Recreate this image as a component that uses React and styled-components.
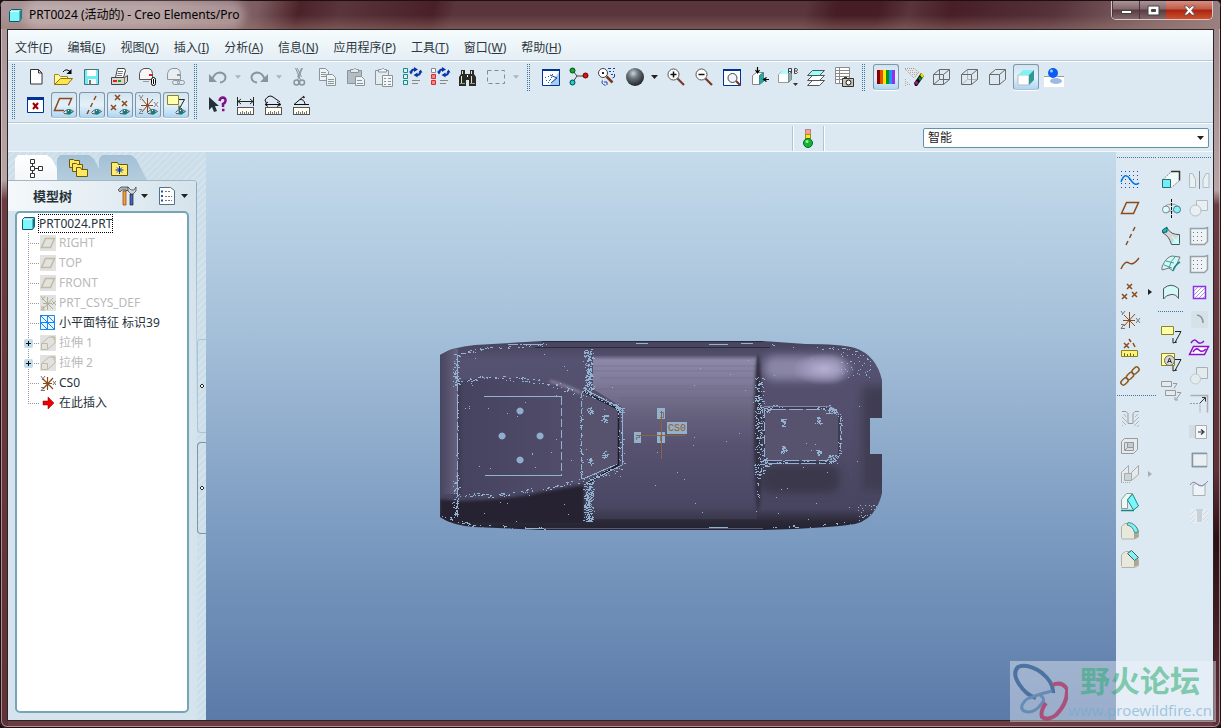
import React, { useState } from "react";
import styled, { createGlobalStyle, css } from "styled-components";

/* ---------- icons, all on a 20x20 grid ---------- */

const eye = (
  <>
    <path d="M9.500 17.500Q14 12 19.500 16.500Q15 20.500 10 18.500" fill="#dfeaea" stroke="#555" />
    <circle cx="15" cy="17" r="2.500" fill="#127f7c" />
    <rect x="14" y="15" width="1" height="1" fill="#fff" />
  </>
);

const ruler = (
  <>
    <rect x="1.500" y="12.500" width="16" height="7" fill="#fffdf4" stroke="#555" />
    <path d="M4.500 19v-2M6.500 19v-3M8.500 19v-2M10.500 19v-3M12.500 19v-2M14.500 19v-3" stroke="#777" />
  </>
);

const refresh = (
  <>
    <path d="M9 6Q9 2.500 12.500 2.500M18.500 4Q18.500 8 15 8" fill="none" stroke="#0a35a8" strokeWidth="2" />
    <path d="M12 0l4 2.500-4 2.500zM15.500 5.500l-4 2.500 4 2.500zM7 4.500h4l-2 3zM16.500 5.500h4l-2-3z" fill="#0a35a8" />
  </>
);

const redX = (x, y, c = "#8a4a1c") => (
  <path key={`${x}-${y}`} d={`M${x} ${y}l5 5M${x + 5} ${y}l-5 5`} stroke={c} strokeWidth="1.500" fill="none" />
);

const wireBox = (
  <path d="M1.500 7.500h10v10h-10zM7.500 2.500h10v10M1.500 7.500l6-5M11.500 7.500l6-5M11.500 17.500l6-5" fill="none" stroke="#6a6a6a" />
);

const hatch = "M2 9l5 5M2 13l4 4M2 17l1 1M14 14l5-5M14 18l5-5M17 19l2-2M15 9l3-3M4 6l2 3";

const icons = {
  new: <path d="M4.500 2.500h8l3.500 3.500v11h-11.500zM12.500 2.500v3.500h3.500" fill="#fff" stroke="#333" />,
  open: (
    <>
      <path d="M.500 17.500V7.500h4l2 2h7v3" fill="#fff6a0" stroke="#a08a20" />
      <path d="M.500 17.500l6-6h12l-5 6z" fill="#ffe44a" stroke="#8a7420" />
      <path d="M9 5Q12 1 16 4.500" fill="none" stroke="#000" />
      <path d="M17.500 2v5h-5z" fill="#000" />
    </>
  ),
  save: (
    <>
      <path d="M2.500 2.500h14v15h-14z" fill="#70ecf4" stroke="#48737c" />
      <path d="M5 3h9v6h-9z" fill="#fff" />
      <path d="M6 12h8v5h-8z" fill="#f3f8f8" />
      <path d="M7 13h2v4h-2z" fill="#777" />
    </>
  ),
  print: (
    <>
      <path d="M5.500 10.500l2-9h7l1 2-2 7z" fill="#fff" stroke="#444" />
      <path d="M8 4.500h5M7.500 6.500h5M7 8.500h5" stroke="#777" />
      <path d="M1.500 10.500h13l3-2v6l-3 3h-13z" fill="#d6d6ce" stroke="#444" />
      <path d="M14.500 10.500v7" stroke="#777" />
      <path d="M3 13h4v2h-4z" fill="#e02020" />
      <path d="M8 13h3v2h-3z" fill="#18a018" />
    </>
  ),
  mail: (
    <>
      <path d="M1.500 12.500V6.500Q2 2.500 6 1.500h5Q14.500 2.500 14.500 6.500v6z" fill="#f7f7f7" stroke="#555" />
      <path d="M5 14.500h6" stroke="#999" />
      <path d="M11 7h3v2h-3z" fill="#e02020" />
      <rect x="13.500" y="10.500" width="4" height="8" rx="2" fill="#fff" stroke="#000" />
      <path d="M15.500 12v5" stroke="#000" />
    </>
  ),
  mailLink: (
    <>
      <path d="M1.500 12.500V6.500Q2 2.500 6 1.500h5Q14.500 2.500 14.500 6.500v6z" fill="#e9eef2" stroke="#8f979c" />
      <path d="M11 7h3v2h-3z" fill="#8f979c" />
      <rect x="6.500" y="13.500" width="7" height="4" rx="2" fill="none" stroke="#8f979c" />
      <rect x="11.500" y="13.500" width="7" height="4" rx="2" fill="none" stroke="#8f979c" />
    </>
  ),
  closeWin: (
    <>
      <path d="M1.500 2.500h16v15h-16z" fill="#fff" stroke="#003399" />
      <path d="M1 2h17v3h-17z" fill="#003399" />
      <path d="M7 8l5 6M12 8l-5 6" stroke="#a00000" strokeWidth="2" />
    </>
  ),
  planeOn: (
    <>
      <path d="M10 15.500h-9.500l5-12h12l-3 7" fill="none" stroke="#8a4a1c" strokeWidth="1.500" />
      {eye}
    </>
  ),
  axisOn: (
    <>
      <path d="M14 1l-2 4M10.500 8l-2 4M7 15l-2 4" fill="none" stroke="#8a4a1c" strokeWidth="1.500" />
      {eye}
    </>
  ),
  pointOn: (
    <>
      {redX(5, 0)}
      {redX(1, 10)}
      {redX(12, 6)}
      {eye}
    </>
  ),
  csysOn: (
    <>
      <path d="M9.500 3v15M3 10.500h12M4 4l10 12M15 4l-11 13" stroke="#8a4a1c" fill="none" />
      <path d="M1 0l2 3M5 0l-3 5M16 7l4 5M20 7l-4 5M1 14.500h3l-3 4h4" stroke="#888" fill="none" />
      {eye}
    </>
  ),
  noteOn: (
    <>
      <path d="M1.500.500h11v9h-11z" fill="#ffffb0" stroke="#8a8620" />
      <path d="M13 4.500h5.500l-5 9M13 10.500v4l3-1" fill="none" stroke="#222" />
      {eye}
    </>
  ),
  undo: (
    <>
      <path d="M4.500 11.500Q7 5.500 12 5.500Q17.500 6.500 17.500 10.500Q17 15 12 15.500" fill="none" stroke="#8a949b" strokeWidth="2" />
      <path d="M1 7v8h8z" fill="#8a949b" />
    </>
  ),
  redo: (
    <>
      <path d="M15.500 11.500Q13 5.500 8 5.500Q2.500 6.500 2.500 10.500Q3 15 8 15.500" fill="none" stroke="#8a949b" strokeWidth="2" />
      <path d="M19 7v8h-8z" fill="#8a949b" />
    </>
  ),
  cut: (
    <g fill="none" stroke="#8a949b">
      <path d="M5.500 1l5 12M12.500 1l-5 12M7 1l4.500 9M11.500 1l-4 9" />
      <circle cx="6.500" cy="15.500" r="2.500" strokeWidth="1.500" />
      <circle cx="12" cy="15.500" r="2.500" strokeWidth="1.500" />
    </g>
  ),
  copy: (
    <g fill="#eef3f6" stroke="#8a949b">
      <path d="M1.500 1.500h6l3 3v9h-9zM3 5.500h5M3 7.500h5M3 9.500h5" />
      <path d="M8.500 7.500h6l3 3v8h-9zM10 12.500h6M10 14.500h6M10 16.500h6" />
    </g>
  ),
  paste: (
    <g stroke="#8a949b">
      <path d="M1.500 3.500h14v13h-14z" fill="#b6bdc2" />
      <path d="M4.500 5.500v-3h3l1-1h1l1 1h2v3z" fill="#e4e9ec" />
      <path d="M9.500 9.500h6l3 3v6h-9zM11 13.500h5M11 16.500h6" fill="#eef3f6" />
    </g>
  ),
  pasteSpecial: (
    <g stroke="#8a949b">
      <path d="M1.500 3.500h13v14h-13z" fill="#e4ebef" />
      <path d="M4.500 5v-2.500h3l1-1h1l1 1h2v2.500z" fill="#f4f7f8" />
      <path d="M8.500 8.500h10v11h-10zM10 11.500h2M14 11.500h3M10 14.500h2M14 14.500h3M10 17.500h2M14 17.500h3" fill="#f4f7f8" />
    </g>
  ),
  regen: (
    <>
      {[2, 8, 14].map((y) => (
        <path key={y} d={`M1.500 ${y - 0.5}h4v4h-4z`} fill="#d9f5f3" stroke="#138a88" />
      ))}
      {refresh}
      <path d="M10 13.500h8M10 16.500h6" stroke="#888" />
    </>
  ),
  regenManager: (
    <>
      <path d="M1.500 1.500h4v4h-4z" fill="#fff" stroke="#888" />
      {[8, 14].map((y) => (
        <path key={y} d={`M1.500 ${y - 0.5}h4v4h-4z`} fill="#ff8080" stroke="#d03030" />
      ))}
      {refresh}
      <path d="M10 13.500h8M10 16.500h6" stroke="#888" />
    </>
  ),
  find: (
    <>
      <path d="M3 3h4v4h5V3h4v4l2 3v9h-7v-6h-3v6H1v-9l2-3z" fill="#2a2a26" />
      <path d="M3.500 9v8M13.500 9v8M4.500 4v3M13.500 4v3" stroke="#e0e0d0" />
      <path d="M9 8h1v2h-1z" fill="#fff" />
      <path d="M2 16.500h5M12 16.500h5" stroke="#9a9a80" />
    </>
  ),
  selectBox: <path d="M1.500 3.500h17v13h-17z" fill="none" stroke="#808a90" strokeDasharray="4 3" />,
  whatsThis: (
    <>
      <path d="M1 2v13l3-3 2 5 3-1-2-5h4z" fill="#23303a" />
      <path d="M11.500 6Q12 2.500 15 2.500Q18 3 17.500 6Q17 8.500 15 9v3M14 15h2.500" fill="none" stroke="#80108a" strokeWidth="2.500" />
    </>
  ),
  measureLen: (
    <>
      <path d="M1.500 2v9M17.500 2v9M2 6.500h15M5 4l-3 2.500 3 2.500M14 4l3 2.500-3 2.500" fill="none" stroke="#222" />
      {ruler}
    </>
  ),
  measureCurve: (
    <>
      <path d="M2.500 8.500L1 5Q5-1 9 2L16 7M1 9.500h15M4 7l-3 2.500 3 2M13 7l4 2.500-4 2" fill="none" stroke="#111" />
      {ruler}
    </>
  ),
  measureAngle: (
    <>
      <path d="M12 1l-10 8.500h15M8 4.500Q12 4 13 9M11 3l2-1" fill="none" stroke="#111" />
      {ruler}
    </>
  ),
  sketchView: (
    <>
      <path d="M1.500 2.500h17v16h-17z" fill="#fff" stroke="#003399" />
      <path d="M9 18l9-13v13z" fill="#a8cdec" />
      <path d="M1 2h18v2h-18z" fill="#003399" />
      <path d="M4 10.500h1M7 9.500h1M5 13.500h1M9 12.500h1M7 15.500h1M10 10.500h1M11 7.500h1M8 13.500h1" stroke="#06c" />
      <path d="M9 8l7 3-6 5" fill="none" stroke="#2040a0" />
    </>
  ),
  spin: (
    <>
      <path d="M4 4l4 5h8M8 9l-4 6" fill="none" stroke="#444" />
      <circle cx="3.500" cy="3.500" r="2.500" fill="#10b010" stroke="#043" />
      <circle cx="16.500" cy="8.500" r="2.500" fill="#e01010" stroke="#600" />
      <circle cx="3.500" cy="15.500" r="2.500" fill="#18d0d0" stroke="#044" />
    </>
  ),
  orientMode: (
    <>
      <path d="M9.500 9.500l6 6" stroke="#7a3a1a" strokeWidth="2.500" />
      <circle cx="6" cy="6" r="4.500" fill="#fff" stroke="#444" />
      <path d="M5 5h2v2h-2z" fill="#222" />
      <path d="M11 1.500h3M16 1.500h2M12 4.500h2M16 4.500h1M14 7.500h2M17.500 7v3l-2 1M5.500 13.500q-2 3 3 5M7 15h3v3" stroke="#1c3ea8" fill="none" />
    </>
  ),
  zoomIn: (
    <>
      <path d="M11 11l7 7" stroke="#7a3a2a" strokeWidth="2.200" />
      <circle cx="7.500" cy="7.500" r="5.500" fill="#fff" stroke="#555" />
      <path d="M4.500 7.500h6M7.500 4.500v6" stroke="#111" strokeWidth="1.500" />
    </>
  ),
  zoomOut: (
    <>
      <path d="M11 11l7 7" stroke="#7a3a2a" strokeWidth="2.200" />
      <circle cx="7.500" cy="7.500" r="5.500" fill="#fff" stroke="#555" />
      <path d="M4.500 7.500h6" stroke="#111" strokeWidth="1.500" />
    </>
  ),
  refit: (
    <>
      <path d="M1.500 2.500h17v16h-17z" fill="#fff" stroke="#003399" />
      <path d="M1 2h18v2h-18z" fill="#003399" />
      <path d="M14 14l4.500 4.500" stroke="#7a3a2a" strokeWidth="2.200" />
      <circle cx="10.500" cy="11" r="4.500" fill="#f0f4fc" stroke="#444" />
    </>
  ),
  reorient: (
    <>
      <path d="M2.500 8.500l4-3h7l-4 3v9h-7z" fill="#fff" stroke="#888" />
      <path d="M9.500 8.500l4-3v9l-4 3z" fill="#22aaa6" stroke="#4a8a88" />
      <path d="M7.500 0v5M5.500 3l2 3 2-3M19 12.500h-5M16.500 10.500l-3 2 3 2" fill="none" stroke="#000" strokeWidth="1.200" />
    </>
  ),
  savedViews: (
    <>
      <path d="M.500 7.500l3-3h10l-3 3v8h-10z" fill="#fff" stroke="#999" />
      <path d="M1 7l3-3h9l-3 3z" fill="#a8ffff" />
      <path d="M10.500 7.500l3-3v8l-3 3z" fill="#7ab8b6" stroke="#888" />
      <path d="M10.500 6.500V1.500h3v5M10.500 4.500h3M16.500 6.500V1.500h2l1 1-1 2 1 1-1 1zM16.500 4h2" fill="none" stroke="#444" />
      <path d="M15 16h5l-2.500 3z" fill="#333" />
    </>
  ),
  layers: (
    <g stroke="#555">
      <path d="M1.500 18.500l5-5h12l-5 5z" fill="#fff" />
      <path d="M1.500 13.500l5-5h12l-5 5z" fill="#fff" />
      <path d="M1.500 8.500l5-5h12l-5 5z" fill="#98ffff" />
    </g>
  ),
  viewManager: (
    <>
      <path d="M1.500.500h14v16h-14zM5.500.500v16M1.500 3.500h14M1.500 6.500h14M1.500 9.500h14M1.500 12.500h14" fill="#fff" stroke="#8a8a8a" />
      <path d="M8.500 11.500h11v8h-11z" fill="#c8c8b4" stroke="#333" />
      <path d="M10 10.500h3" stroke="#333" />
      <circle cx="14.500" cy="15.500" r="2.500" fill="#fff" stroke="#111" />
    </>
  ),
  rainbow: (
    <>
      {["#8b0000", "#e05000", "#ffe800", "#0a960a", "#1e90ff", "#9030f0"].map((c, i) => (
        <rect key={c} x={1 + i * 3} y="3" width="3" height="14" fill={c} />
      ))}
    </>
  ),
  eraser: (
    <>
      <path d="M1 1h9l5 4-5 6-9-8z" fill="#e6e8e8" />
      <path d="M1 1.500h9l5 4M1 2l9 9 5-6" fill="none" stroke="#999" strokeDasharray="1 1" />
      <path d="M4 3.500h6M6 5.500h7M8 7.500h5M1.500 12v7M3.500 15v4M5.500 17v2" fill="none" stroke="#aaa" strokeDasharray="1 1" />
      <path d="M10 16l7-10 3 3-7 10h-2z" fill="#111" />
      <path d="M16 8l2-2 2 3-2 2z" fill="#f0d800" />
      <path d="M14 11l2-1 2 2-2 2z" fill="#0a8a1a" />
      <path d="M11 15l2-1 1 2-2 2z" fill="#c010c0" />
    </>
  ),
  wireframe: (
    <>
      {wireBox}
      <path d="M7.500 2.500v10h10M1.500 17.500l6-5" fill="none" stroke="#6a6a6a" />
    </>
  ),
  hiddenLine: (
    <>
      <path d="M7.500 2.500v10h10M1.500 17.500l6-5" fill="none" stroke="#b4b4b4" />
      {wireBox}
    </>
  ),
  noHidden: wireBox,
  shading: (
    <>
      <path d="M2 8h11v10h-11z" fill="#fff" stroke="#bbb" />
      <path d="M2 8l5-5h11l-5 5z" fill="#7ef4f6" />
      <path d="M13 8l5-5v10l-5 5z" fill="#2f9794" />
    </>
  ),
  enhanced: (
    <>
      <path d="M0 10h20v10h-20z" fill="#fff" />
      <path d="M0 9.500h5M13 9.500h7" stroke="#999" />
      <ellipse cx="12" cy="14" rx="6" ry="3" fill="#9dbbe2" />
      <circle cx="9" cy="6" r="5" fill="#0a5cf0" />
      <circle cx="7.500" cy="4" r="1.500" fill="#8fd0ff" />
    </>
  ),
  sketch: (
    <>
      {[2, 6, 10, 14, 18].map((y) => (
        <path key={y} d={`M1 ${y - 0.5}h18`} stroke="#2048b0" strokeDasharray="1 3" />
      ))}
      <path d="M1 12Q5 1 10 9T19 13" fill="none" stroke="#0078e8" strokeWidth="1.500" />
    </>
  ),
  plane: <path d="M6.500 4.500h12l-5 11h-12z" fill="none" stroke="#8a4a1c" strokeWidth="1.500" />,
  axis: <path d="M15 1l-2 4M11.500 8l-2 4M8 15l-2 4" fill="none" stroke="#8a4a1c" strokeWidth="1.500" />,
  curve: <path d="M1 15Q5 6 9 9T19 4" fill="none" stroke="#8a4a1c" strokeWidth="1.500" />,
  points: (
    <>
      {redX(7, 2)}
      {redX(2, 12)}
      {redX(12, 10)}
    </>
  ),
  csys: (
    <>
      <path d="M9.500 2v16M3 10.500h12M4 5l11 11M15 4l-11 12" stroke="#8a4a1c" fill="none" />
      <path d="M1 1l2 3M5 1l-3 4M16 8l4 5M20 8l-4 5M1 14.500h3l-3 4h4" stroke="#777" fill="none" />
    </>
  ),
  analysis: (
    <>
      {redX(4, 5)}
      <path d="M9 1l2 3M13 5l2 4" stroke="#8a4a1c" strokeWidth="1.500" />
      <path d="M1.500 12.500h16v6h-16z" fill="#fff27a" stroke="#8a8420" />
      <path d="M4.500 18v-3M7.500 18v-2M10.500 18v-3M13.500 18v-2" stroke="#6e6a10" />
    </>
  ),
  chain: (
    <g fill="none" stroke="#8a5a20" strokeWidth="1.500">
      <rect x="-4" y="-2.500" width="8" height="5" rx="2.500" transform="translate(4.500 15.500) rotate(-45)" />
      <rect x="-4" y="-2.500" width="8" height="5" rx="2.500" transform="translate(10 10) rotate(-45)" />
      <rect x="-4" y="-2.500" width="8" height="5" rx="2.500" transform="translate(15.500 4.500) rotate(-45)" />
    </g>
  ),
  hole: (
    <>
      <path d={hatch} stroke="#b0b4b6" />
      <path d="M2 3.500h4l2 2v10h5V5.500l2-2h4" fill="none" stroke="#999" />
    </>
  ),
  shell: (
    <g stroke="#999">
      <path d="M1.500 5.500l3-3h13v11l-4 4h-12zM13.500 17.500l4-4" fill="#e4eaee" />
      <path d="M4.500 6.500h9v8h-9z" fill="#d8dfe3" />
      <path d="M7.500 6.500h6v5h-6zM4.500 14.500l3-3" fill="#c2cacf" />
    </g>
  ),
  rib: (
    <g stroke="#aaa">
      <path d="M1.500 18.500V8.500l7-7v9M11.500 16.500V8.500l7-7v9z" fill="#e4eaee" />
      <path d="M4.500 9.500h7v7h-7z" fill="#ccd4d8" />
      <path d="M1 18.500h10" strokeDasharray="1 1" />
    </g>
  ),
  draft: (
    <>
      <path d="M1.500 7.500l5-6h6l-5 6v9h-6z" fill="#e9fbf6" stroke="#999" />
      <path d="M7.500 8l5-6 6 12-5 4z" fill="#7cf6fa" stroke="#158a88" />
      <path d="M1 18.500h13" stroke="#158a88" strokeWidth="1.500" />
    </>
  ),
  round: (
    <>
      <path d="M1.500 18V6.500L5 3.500h5Q18 5 18.500 13v4l-4 2h-13" fill="#e8e8dc" stroke="#b4b4a4" />
      <path d="M14 13l4-1v5l-4 2z" fill="#a8a894" />
      <path d="M8 2.500Q16 3 18.500 12l-4 .5Q13 6 7 5z" fill="#7cf4f8" stroke="#4a8a8a" />
    </>
  ),
  chamfer: (
    <>
      <path d="M1.500 18V6.500l4-3h5l8 8v6l-4 2h-13" fill="#e8e8dc" stroke="#b4b4a4" />
      <path d="M14 13l4-2v6l-4 2z" fill="#a8a894" />
      <path d="M7.500 5.500l4-3 7 7-4 3z" fill="#7cf4f8" stroke="#555" />
    </>
  ),
  extrude: (
    <>
      <path d="M1.500 10l9-8.500h8v9l-8 7" fill="#f0faf8" stroke="#888" strokeDasharray="2 1" />
      <path d="M10 1.500h8.500v9" fill="none" stroke="#333" strokeWidth="1.500" />
      <path d="M1.500 9.500h8v8h-8z" fill="#70f0f4" stroke="#2a6a7a" />
    </>
  ),
  revolve: (
    <>
      <circle cx="5" cy="11.500" r="3.500" fill="#d8ffff" stroke="#888" />
      <circle cx="16" cy="11.500" r="3.500" fill="#80f4f6" stroke="#478" />
      <path d="M4 8Q10.500 4 17 8M5 15Q10.500 11 16 15" fill="none" stroke="#999" />
      <path d="M10.500 1v19" stroke="#111" strokeDasharray="3 1" />
    </>
  ),
  sweep: (
    <>
      <path d="M6 2Q10 9 18.500 8.500v10h-8Q8 10 2 7z" fill="#d4d7d7" stroke="#555" />
      <path d="M1.500 6.500V4L6 1v5z" fill="#28b8b8" stroke="#066" />
      <path d="M11 18V17l7-8v9z" fill="#b4ffff" />
      <path d="M11 10.500l7 7" stroke="#fff" />
    </>
  ),
  blend: (
    <>
      <path d="M1 13Q5 3 11 2l8 1Q17 7 16 10Q13 12 12 17L8 14l-7 2z" fill="#d0f8f8" stroke="#777" />
      <path d="M5 7l8 2M8 14q1-7 7-12M3 11l8 3" fill="none" stroke="#4a9a98" />
      <path d="M12 17q2-6 7-9" fill="none" stroke="#158a88" strokeWidth="1.500" />
    </>
  ),
  fill: <path d="M2.500 17V6.500Q10 0 17.500 6.500v10Q15 12 10 12.500T2.500 17z" fill="#d4f8f8" stroke="#555" />,
  noteYellow: (
    <>
      <path d="M.500 2.500h12v8h-12z" fill="#ffffa8" stroke="#8a8620" />
      <path d="M14 7.500h6l-6 11M12 14v5l4-1" fill="none" stroke="#222" />
    </>
  ),
  symbolNote: (
    <>
      <path d="M.500 1.500h13v12h-13z" fill="#ffffa8" stroke="#8a8620" />
      <circle cx="8.500" cy="8.500" r="5" fill="#d8d8d0" stroke="#666" />
      <path d="M6.500 11l2-5 2 5M7 9.500h3" fill="none" stroke="#333" />
      <path d="M14 7.500h6l-6 11M12 14v5l4-1" fill="none" stroke="#222" />
    </>
  ),
  noteGrey: (
    <g fill="#e4eaee" stroke="#999">
      <path d="M.500 1.500h10v5h-10zM4.500 10.500h10v5h-10z" />
      <path d="M12 3.500h4l-3 5M16 12.500h4l-5 7M14 17v3h3" fill="none" />
    </g>
  ),
  mirror: (
    <g fill="#e9f0f4" stroke="#b4bcc2">
      <path d="M.500 3.500h3l3 6v8h-6zM20 3.500h-3l-3 6v8h6z" />
      <path d="M10.500 1v18" stroke="#888" />
    </g>
  ),
  merge: (
    <g fill="#e9f0f4" stroke="#b4bcc2">
      <path d="M7.500 2.500h11v10h-11z" />
      <circle cx="6.500" cy="12.500" r="5.500" />
    </g>
  ),
  pattern: (
    <>
      <path d="M1.500 2.500h14l3-1v14l-3 3h-14z" fill="#edf3f6" stroke="#98a0a6" strokeWidth="1.500" />
      <path d="M4 6.500h11M4 10.500h11M4 14.500h11" stroke="#777" strokeDasharray="1 3" />
    </>
  ),
  hatchBox: (
    <>
      <path d="M4.500 4.500h12v12h-12z" fill="#fff" stroke="#8c30e8" strokeWidth="1.500" />
      <path d="M5 9l4-4M5 13l8-8M6 16l10-10M10 16l6-6M14 16l2-2" stroke="#a494e8" />
    </>
  ),
  trim: (
    <>
      <path d="M2 1h17v17h-17z" fill="#d6e1e8" />
      <path d="M8 5Q14 6 14 13" fill="none" stroke="#8c949c" strokeWidth="1.500" />
    </>
  ),
  styleCurve: (
    <g fill="none" stroke="#8c10c8" strokeWidth="1.500">
      <path d="M2 5Q5 0 8 3.500T15 3" />
      <path d="M4.500 8.500h15l-4 8h-15z" fill="#fff" />
      <path d="M4 14Q7 9 10 12T17 11" />
    </g>
  ),
  mergeGrey: (
    <g fill="#e4ebef" stroke="#c0c8cc">
      <path d="M7.500 1.500h11v11h-11z" stroke="#a8b0b6" />
      <circle cx="6.500" cy="13" r="5" />
    </g>
  ),
  scaleBox: (
    <>
      <path d="M1.500 1.500h17v17" fill="none" stroke="#a8b0b6" strokeWidth="1.500" />
      <path d="M1 9.500h10v9" fill="none" stroke="#98a0a6" strokeDasharray="2 1" />
      <path d="M11 9l5-5M13 3.500h3.500v4" fill="none" stroke="#333" />
    </>
  ),
  arrowBox: (
    <>
      <path d="M0 3h7v13h-7z" fill="#d3dce2" />
      <path d="M6.500 3.500h11v13h-11z" fill="#f4f7f9" stroke="#a8b0b6" />
      <path d="M9 10h5M12 7.500l3 2.500-3 2.500" fill="none" stroke="#333" strokeWidth="1.200" />
    </>
  ),
  frameBox: (
    <>
      <path d="M3 3h15v14h-15z" fill="#e9f0f4" stroke="#b4bcc2" />
      <path d="M18 3.500h-14.500v13h14.500" fill="none" stroke="#8a949b" strokeWidth="1.500" />
    </>
  ),
  boundary: (
    <>
      <path d="M4 17.500V7q3-3 6 0 4 2 6-1v11.500z" fill="#edf3f6" stroke="#a8b0b6" />
      <path d="M1 7Q4 2 8 6T16 6l3-3" fill="none" stroke="#889" />
    </>
  ),
  holeGrey: (
    <>
      <path d="M1 3h18v14h-18z" fill="#e6edf2" />
      <path d="M7 3h7v2h-1v11h-5v-11h-1z" fill="#c8d1d7" />
      <path d="M1 9l5-5M1 14l5-5M2 17l4-4M14 9l5-5M14 14l5-5M15 17l4-4" stroke="#d0d8dd" />
    </>
  ),
  tabTree: (
    <path d="M4.500 1.500h4v4h-4zM4.500 8.500h4v4h-4zM4.500 15.500h4v4h-4zM12.500 8.500h4v4h-4zM6.500 5.500v3M6.500 12.500v3M8.500 10.500h4" fill="#fff" stroke="#333" />
  ),
  tabFolders: (
    <g fill="#ffe860" stroke="#6a5a10">
      <path d="M1.500 1.500h4l1 1h5v7h-10z" />
      <path d="M4.500 5.500h4l1 1h5v7h-10z" />
      <path d="M8.500 9.500h4l1 2h6v7h-11z" />
    </g>
  ),
  tabFav: (
    <>
      <path d="M1.500 4.500h6l1 2h9v11h-16z" fill="#ffec70" stroke="#6a5a10" />
      <path d="M9.500 8v8M5.500 12h8M7 9.500l5 5M12 9.500l-5 5" stroke="#0030b0" />
    </>
  ),
  tools: (
    <>
      <path d="M0 4l3-3h7l1 3-3 1v-1h-4l-2 2z" fill="#aab4ba" stroke="#333" strokeWidth=".7" />
      <path d="M5 5h3v14h-3z" fill="#f0a040" stroke="#8a4010" strokeWidth=".7" />
      <path d="M12 8h3v11h-3z" fill="#3a66c8" stroke="#222" strokeWidth=".7" />
      <path d="M10 1v4l3 3h2l3-3V1l-2 3h-3z" fill="#d0d8dc" stroke="#333" strokeWidth=".7" />
    </>
  ),
  listShow: (
    <>
      <path d="M1.500 1.500h11l4 3v14h-15z" fill="#fff" stroke="#55708a" />
      <path d="M3 5.500h2M3 10h2M3 14.500h2" stroke="#1a56b0" strokeWidth="2" />
      <path d="M7 5.500h6M7 10.500h7M7 14.500h7" stroke="#777" strokeDasharray="2 1" />
    </>
  ),
};

const treeIcons = {
  part: (
    <>
      <path d="M1.500 4.500l2-2h10v9l-2 3h-10z" fill="#80f6f8" stroke="#157" />
      <path d="M11.500 4.500l2-2v9l-2 3z" fill="#127a80" />
      <path d="M2 4.500h9" stroke="#dff" />
    </>
  ),
  plane: (
    <>
      <path d="M0 0h16v16h-16z" fill="#e2e2e2" />
      <path d="M5.500 3.500h9l-4 9h-9z" fill="none" stroke="#c0bca0" strokeWidth="1.500" />
    </>
  ),
  csysGrey: (
    <>
      <path d="M0 0h16v16h-16z" fill="#e2e2e2" />
      <path d="M7.500 2v13M3 8.500h9M3 4l10 10M13 3l-10 11M1 1l2 3M5 1l-3 4M12 6l4 4M16 6l-4 4M1 12h3l-3 3h4" fill="none" stroke="#b4b098" />
    </>
  ),
  facet: <path d="M.500.500h14v14h-14zM7.500 0v15M0 7.500h15M0 0l15 15M7 0l8 8M0 7l8 8" fill="#e6f8ff" stroke="#1c86ee" />,
  extrude: (
    <>
      <path d="M0 0h16v16h-16z" fill="#e2e2e2" />
      <path d="M1.500 8.500h6v6h-6zM2 8l7-6h6v6l-7 6M11 2h3v3" fill="none" stroke="#c0bca0" />
    </>
  ),
  csys: (
    <>
      <path d="M7.500 2v13M3 8.500h9M3 4l10 10M13 3l-10 11" fill="none" stroke="#8a4a1c" strokeWidth="1.200" />
      <path d="M1 1l2 3M5 1l-3 4M13 6l3 4M16 6l-3 4M1 12.500h3l-3 3h4" fill="none" stroke="#777" />
    </>
  ),
  arrow: <path d="M3 6h5V2l6 6-6 6v-4h-5z" fill="#f00000" stroke="#700" strokeWidth=".5" />,
};

const Icon = ({ name }) => (
  <IconSvg viewBox="0 0 20 20" aria-hidden="true">
    {icons[name]}
  </IconSvg>
);

/* ---------- data ---------- */

const menus = [
  ["文件", "F"], ["编辑", "E"], ["视图", "V"], ["插入", "I"], ["分析", "A"], ["信息", "N"],
  ["应用程序", "P"], ["工具", "T"], ["窗口", "W"], ["帮助", "H"],
];

const fileTools = ["new", "open", "save", "print", "mail", "mailLink"];
const datumTools = ["closeWin", "planeOn", "axisOn", "pointOn", "csysOn", "noteOn"];
const editTools = ["undo", "v-", "redo", "v-", "cut", "copy", "paste", "pasteSpecial", "regen", "regenManager", "find", "selectBox", "v-"];
const measureTools = ["whatsThis", "measureLen", "measureCurve", "measureAngle"];
const viewTools = ["sketchView", "spin", "orientMode", "sphere", "v", "zoomIn", "zoomOut", "refit", "reorient", "savedViews", "layers", "viewManager"];
const displayTools = ["rainbow", "eraser", "wireframe", "hiddenLine", "noHidden", "shading", "enhanced"];

const colA1 = ["sketch", "plane", "axis", "curve", "points", "csys", "analysis", "chain"];
const colA2 = ["hole", "shell", "rib", "draft", "round", "chamfer"];
const colB1 = ["extrude", "revolve", "sweep", "blend", "fill"];
const colB2 = ["noteYellow", "symbolNote", "noteGrey"];
const colC = ["mirror", "merge", "pattern", "pattern", "hatchBox", "trim", "styleCurve", "mergeGrey", "scaleBox", "arrowBox", "frameBox", "boundary", "holeGrey"];

const treeRows = [
  { icon: "plane", label: "RIGHT", grey: true },
  { icon: "plane", label: "TOP", grey: true },
  { icon: "plane", label: "FRONT", grey: true },
  { icon: "csysGrey", label: "PRT_CSYS_DEF", grey: true },
  { icon: "facet", label: "小平面特征 标识39" },
  { icon: "extrude", label: "拉伸 1", grey: true, plus: true },
  { icon: "extrude", label: "拉伸 2", grey: true, plus: true },
  { icon: "csys", label: "CS0" },
  { icon: "arrow", label: "在此插入" },
];

/* ---------- toolbar pieces ---------- */

const Arrow = ({ dim }) => (
  <ArrowBtn aria-label="more">
    <svg width={dim ? 6 : 7} height="4" viewBox="0 0 7 4">
      <path d="M0 0h7L3.500 4z" fill={dim ? "#aab4ba" : "#222"} />
    </svg>
  </ArrowBtn>
);

const Tools = ({ items, pressed = [] }) => (
  <ToolRow>
    {items.map((name, i) => {
      if (name === "v" || name === "v-") return <Arrow key={i} dim={name === "v-"} />;
      return (
        <ToolBtn key={i} aria-label={name} $pressed={pressed.includes(name)}>
          {name === "sphere" ? <Sphere /> : <Icon name={name} />}
        </ToolBtn>
      );
    })}
  </ToolRow>
);

const SideTools = ({ items, flyouts = [], dim = [] }) =>
  items.map((name, i) => (
    <SideRow key={i}>
      <ToolBtn aria-label={name}>
        <Icon name={name} />
      </ToolBtn>
      {flyouts.includes(name) && (
        <Flyout aria-label={`${name} flyout`}>
          <svg width="4" height="6" viewBox="0 0 4 6">
            <path d="M0 0v6L4 3z" fill={dim.includes(name) ? "#a4aeb4" : "#222"} />
          </svg>
        </Flyout>
      )}
    </SideRow>
  ));

/* ---------- the model in the viewport ---------- */

const makeRandom = (seed) => () => {
  seed = (seed * 1103515245 + 12345) % 2147483648;
  return seed / 2147483648;
};
const rnd = makeRandom(39);
const px = (x, y, w = 1) => `M${Math.round(x)} ${Math.round(y)}h${w}v1h-${w}z`;

// random pixels in a box, thicker towards its middle
const scatter = (x, y, w, h, n) => {
  let d = "";
  for (let i = 0; i < n; i++) d += px(x + ((rnd() + rnd()) / 2) * w, y + rnd() * h, rnd() > 0.7 ? 2 : 1);
  return d;
};
const along = (pts, n, spread) => {
  let d = "";
  for (let i = 0; i < n; i++) {
    const s = rnd() * (pts.length - 1);
    const k = Math.floor(s);
    const t = s - k;
    const x = pts[k][0] * (1 - t) + pts[k + 1][0] * t;
    const y = pts[k][1] * (1 - t) + pts[k + 1][1] * t;
    d += px(x + (rnd() - 0.5) * spread, y + (rnd() - 0.5) * spread, rnd() > 0.7 ? 2 : 1);
  }
  return d;
};
const evenly = (x, y, w, h, n) => {
  let d = "";
  for (let i = 0; i < n; i++) d += px(x + rnd() * w, y + rnd() * h);
  return d;
};

const speckles = [
  scatter(12, 12, 8, 32, 65),
  scatter(12, 138, 8, 38, 55),
  evenly(16, 44, 3, 95, 20),
  scatter(143, 8, 11, 42, 180),
  scatter(143, 141, 11, 40, 190),
  scatter(313, 36, 12, 40, 100),
  scatter(313, 76, 12, 58, 120),
  scatter(315, 130, 6, 26, 16),
  along([[18, 40], [50, 36], [90, 39], [140, 52]], 75, 5),
  along([[18, 154], [57, 154], [107, 147], [140, 140]], 75, 4),
  along([[141, 50], [178, 65], [181, 70], [181, 125], [142, 142]], 150, 6),
  along([[141, 50], [141, 140]], 40, 3),
  along([[324, 66], [390, 66], [400, 76], [400, 112], [390, 121], [324, 121]], 95, 4),
  scatter(384, 65, 14, 8, 35),
  scatter(384, 114, 14, 8, 35),
  scatter(319, 65, 14, 7, 25),
  scatter(319, 117, 14, 9, 30),
  evenly(400, 10, 30, 26, 40),
  evenly(418, 164, 18, 16, 30),
  along([[18, 14], [45, 7], [110, 3]], 50, 3),
  along([[2, 175], [33, 184], [110, 188]], 40, 3),
  along([[330, 4], [380, 7], [412, 8], [432, 22]], 22, 3),
  along([[330, 187], [380, 184], [412, 182]], 18, 3),
  evenly(4, 10, 150, 170, 40),
  evenly(160, 15, 260, 165, 40),
].join("");

const holes = [[150, 69], [165, 77], [165, 113], [150, 120], [344, 81], [379, 79], [344, 108], [379, 111]];
const holePixels = holes.map(([x, y]) => scatter(x - 4, y - 3, 7, 7, 26)).join("");

const outline =
  "M0 14Q12 6 35 4L102 0H323L366 3Q400 3 415 7Q436 14 442 39V77H430V113H442V152Q436 178 415 183Q390 187 323 189H102L33 186Q12 184 0 176Z";

const Model = () => (
  <ModelSvg viewBox="0 0 442 190" role="img" aria-label="PRT0024">
    <defs>
      <clipPath id="body">
        <path d={outline} />
      </clipPath>
      <linearGradient id="base" x1="0" y1="0" x2="0" y2="1">
        <stop offset="0" stopColor="#46435c" />
        <stop offset=".1" stopColor="#555170" />
        <stop offset=".5" stopColor="#514d6a" />
        <stop offset=".88" stopColor="#484560" />
        <stop offset=".95" stopColor="#2b2938" />
        <stop offset="1" stopColor="#232230" />
      </linearGradient>
      <linearGradient id="mid" x1="0" y1="0" x2="0" y2="1">
        <stop offset="0" stopColor="#514e69" />
        <stop offset=".03" stopColor="#8d88a8" />
        <stop offset=".16" stopColor="#807b9a" />
        <stop offset=".34" stopColor="#68647f" />
        <stop offset=".55" stopColor="#565270" />
        <stop offset=".92" stopColor="#4a4764" />
        <stop offset="1" stopColor="#3a384c" />
      </linearGradient>
      <linearGradient id="pocket" x1="0" y1="0" x2="1" y2="0">
        <stop offset="0" stopColor="#3c394f" />
        <stop offset=".04" stopColor="#464360" />
        <stop offset="1" stopColor="#524e6b" />
      </linearGradient>
      <linearGradient id="leftEdge" x1="0" y1="0" x2="1" y2="0">
        <stop offset="0" stopColor="#484560" />
        <stop offset="1" stopColor="#676280" />
      </linearGradient>
      <radialGradient id="shine">
        <stop offset="0" stopColor="#b6b0d2" />
        <stop offset="1" stopColor="#b2accf" stopOpacity="0" />
      </radialGradient>
      <filter id="soft" x="-30%" y="-40%" width="160%" height="180%">
        <feGaussianBlur stdDeviation="4" />
      </filter>
      <filter id="soft2" x="-100%" y="-20%" width="300%" height="140%">
        <feGaussianBlur stdDeviation="1.500" />
      </filter>
    </defs>
    <g clipPath="url(#body)">
      <rect width="442" height="190" fill="url(#base)" />
      <rect y="8" width="18" height="145" fill="url(#leftEdge)" />
      <path d="M18 40Q50 34 90 39Q120 43 141 52V141Q110 152 57 155L18 154Z" fill="url(#pocket)" />
      <path d="M0 158L18 160Q70 159 107 150L144 144V182H0Z" fill="#262432" filter="url(#soft2)" />
      <path d="M110 40Q130 46 141 52" fill="none" stroke="#9a8fae" strokeWidth="2" filter="url(#soft2)" />
      <path d="M153 14H317V178H153V141L182 124V66L153 48Z" fill="url(#mid)" />
      <path d="M153 25h163M153 30h163M160 37h156M170 45h146M153 48h163M180 57h136" stroke="#5d5977" strokeOpacity=".25" />
      <rect x="324" y="15" width="80" height="24" rx="10" fill="#8a85a6" filter="url(#soft)" />
      <ellipse cx="384" cy="28" rx="32" ry="16" fill="url(#shine)" />
      <rect x="320" y="124" width="80" height="28" rx="10" fill="#3a384b" filter="url(#soft)" />
      <rect x="422" y="45" width="30" height="105" fill="#403d52" filter="url(#soft)" />
      <ellipse cx="318" cy="92" rx="4" ry="78" fill="#302e3f" filter="url(#soft2)" />
      <g shapeRendering="crispEdges">
        <path d="M102 .500h221M95 6.500h235" stroke="#2c2a3a" />
        <path d="M102 187.500h221" stroke="#5d5977" />
      </g>
      <rect x="324" y="67" width="75" height="54" rx="8" fill="#57536f" stroke="#2b2938" />
      <path d="M324 65.500h62q10 0 13 8" fill="none" stroke="#8d84a6" />
      <path d="M142 51L178 67V124L142 140Z" fill="#57536f" />
      <path d="M144 51L178 68M178.500 67V125M178 124L146 143" fill="none" stroke="#1e1c28" strokeWidth="1.500" />
      <g shapeRendering="crispEdges" fill="none" stroke="#93b2d2">
        <path d="M17.500 14V175" strokeDasharray="24 4 8 3" />
        <path d="M44 55.500H122M45 134.500H122" />
        <path d="M121.500 56V134" strokeDasharray="8 3" />
        <path d="M141.500 52V140" strokeDasharray="5 3" />
        <path d="M143 47L182 68V124L146 142M143 138L175 124" />
        <path d="M324.500 68V118" strokeDasharray="9 4" />
        <path d="M328 119.500H388M328 122.500H386M332 68.500h52" strokeDasharray="14 3" />
        <path d="M400.500 76V112" strokeDasharray="5 4" />
        <path d="M85 3.500h18M85 187.500h18M269 3.500h19M269 186.500h19M301 2.500h12M196 2.500h12M68 3.500h10" />
      </g>
      <path d="M80 66.500a3.500 3.500 0 1 0 .1 0M62 91.500a3.500 3.500 0 1 0 .1 0M100 91.500a3.500 3.500 0 1 0 .1 0M80 115.500a3.500 3.500 0 1 0 .1 0" fill="#8fadcd" />
      <path d={speckles + holePixels} fill="#93b2d2" shapeRendering="crispEdges" />
    </g>
    <g shapeRendering="crispEdges">
      <path d="M217 67h8v11h-8zM194 91h7v11h-7zM217 91h8v11h-8zM227 81h20v12h-20z" fill="#93b0cd" />
      <path d="M220 71h3v5h-3M196 94h3v2h-3v3M220 94v5h2" fill="none" stroke="#777" />
      <path d="M221.500 70V118M197 94.500H245" stroke="#8a6440" />
    </g>
    <CsLabel x="228" y="90">CS0</CsLabel>
  </ModelSvg>
);

const Sphere = () => (
  <svg width="20" height="20" viewBox="0 0 20 20" aria-hidden="true">
    <defs>
      <radialGradient id="ball" cx=".4" cy=".3" r=".7">
        <stop offset="0" stopColor="#cdd3d8" />
        <stop offset=".4" stopColor="#6c757c" />
        <stop offset="1" stopColor="#20252a" />
      </radialGradient>
    </defs>
    <circle cx="10" cy="10" r="9" fill="url(#ball)" />
  </svg>
);

const App = () => {
  const [filter, setFilter] = useState("smart");

  return (
    <>
      <GlobalStyle />
      <Window>
        <TitleBar>
          <TreeSvg viewBox="0 0 16 16" aria-hidden="true">{treeIcons.part}</TreeSvg>
          <Title>PRT0024 (活动的) - Creo Elements/Pro</Title>
          <WinControls>
            <WinBtn aria-label="minimize">
              <svg width="13" height="9" viewBox="0 0 13 9">
                <rect x="1.500" y="4.500" width="10" height="3" fill="#fff" stroke="#444" />
              </svg>
            </WinBtn>
            <WinBtn aria-label="restore">
              <svg width="13" height="11" viewBox="0 0 13 11">
                <path d="M1 1h11v9H1zM4.500 4.500v2h4v-2z" fill="#fff" stroke="#444" fillRule="evenodd" />
              </svg>
            </WinBtn>
            <WinBtn aria-label="close" $close>
              <svg width="13" height="11" viewBox="0 0 13 11">
                <path d="M1 1h3l2.500 2.500L9 1h3L8.500 5.500 12 10H9L6.500 7.500 4 10H1l3.500-4.500z" fill="#fff" stroke="#555" strokeWidth=".8" />
              </svg>
            </WinBtn>
          </WinControls>
        </TitleBar>

        <Client>
          <MenuBar>
            {menus.map(([label, key]) => (
              <MenuItem key={label}>
                {label}(<u>{key}</u>)
              </MenuItem>
            ))}
          </MenuBar>

          <ToolbarArea>
            <ToolGroup>
              <Handle />
              <ToolRows>
                <Tools items={fileTools} />
                <Tools items={datumTools} pressed={datumTools.slice(1)} />
              </ToolRows>
            </ToolGroup>
            <ToolGroup>
              <Handle />
              <ToolRows>
                <Tools items={editTools} />
                <Tools items={measureTools} />
              </ToolRows>
            </ToolGroup>
            <ToolGroup>
              <Handle />
              <Tools items={viewTools} />
            </ToolGroup>
            <ToolGroup>
              <Handle />
              <Tools items={displayTools} pressed={["rainbow", "shading"]} />
            </ToolGroup>
          </ToolbarArea>

          <StatusRow>
            <LightCell>
              <svg width="12" height="20" viewBox="0 0 12 20" aria-hidden="true">
                <rect x="3.500" y=".500" width="5" height="5" fill="#f2a0a0" stroke="#c08080" />
                <rect x="3.500" y="5.500" width="5" height="4" fill="#ffe818" stroke="#a09010" />
                <circle cx="6" cy="14" r="4.500" fill="#16b42a" stroke="#064" />
                <circle cx="5" cy="12.500" r="1.500" fill="#9cf0a0" />
              </svg>
            </LightCell>
            <SelectWrap>
              <FilterSelect aria-label="filter" value={filter} onChange={(e) => setFilter(e.target.value)}>
                <option value="smart">智能</option>
              </FilterSelect>
              <SelectArrow width="7" height="4" viewBox="0 0 7 4">
                <path d="M0 0h7L3.500 4z" fill="#222" />
              </SelectArrow>
            </SelectWrap>
          </StatusRow>

          <Main>
            <LeftPane>
              <TreePanel>
                <Tabs>
                  <Tab aria-label="model tree" $active><Icon name="tabTree" /></Tab>
                  <Tab aria-label="folders"><Icon name="tabFolders" /></Tab>
                  <Tab aria-label="favorites"><Icon name="tabFav" /></Tab>
                </Tabs>
                <PanelBody>
                  <PanelHead>
                    <PanelTitle>模型树</PanelTitle>
                    <HeadBtn aria-label="settings"><Icon name="tools" /></HeadBtn>
                    <Arrow />
                    <HeadGap />
                    <HeadBtn aria-label="show"><Icon name="listShow" /></HeadBtn>
                    <Arrow />
                  </PanelHead>
                  <TreeBox>
                    <RootRow>
                      <TreeSvg viewBox="0 0 16 16" aria-hidden="true">{treeIcons.part}</TreeSvg>
                      <RootLabel>PRT0024.PRT</RootLabel>
                    </RootRow>
                    <TreeList>
                      {treeRows.map((row, i) => (
                        <TreeRow key={i} $grey={row.grey}>
                          <Branch $last={i === treeRows.length - 1}>
                            {row.plus && (
                              <PlusBtn aria-label="expand">
                                <svg width="9" height="9" viewBox="0 0 9 9">
                                  <path d="M2 4.500h5M4.500 2v5" stroke="#111" shapeRendering="crispEdges" />
                                </svg>
                              </PlusBtn>
                            )}
                          </Branch>
                          <TreeSvg viewBox="0 0 16 16" aria-hidden="true">{treeIcons[row.icon]}</TreeSvg>
                          <span>{row.label}</span>
                        </TreeRow>
                      ))}
                    </TreeList>
                  </TreeBox>
                </PanelBody>
              </TreePanel>
              <SplitBar>
                <SplitGrip aria-label="collapse" />
                <SplitGrip aria-label="expand" $dark />
              </SplitBar>
            </LeftPane>

            <Viewport>
              <Model />
            </Viewport>

            <RightPane>
              <SideCol>
                <Sep />
                <SideTools items={colA1} flyouts={["points"]} />
                <Sep />
                <SideTools items={colA2} flyouts={["rib"]} dim={["rib"]} />
              </SideCol>
              <SideBlock>
                <Sep />
                <SideCols>
                  <SideCol>
                    <SideTools items={colB1} />
                    <Sep />
                    <SideTools items={colB2} />
                  </SideCol>
                  <SideCol>
                    <SideTools items={colC} />
                  </SideCol>
                </SideCols>
              </SideBlock>
            </RightPane>
          </Main>
        </Client>

        <Watermark>
          <svg width="58" height="60" viewBox="0 0 58 60" fill="none" aria-hidden="true">
            <path d="M43 32Q44 22 32 12Q18 2 8 6Q2 12 9 23Q16 34 26 37" stroke="#1f5088" strokeWidth="4" />
            <path d="M42 30Q26 34 17 38Q8 46 14 50Q24 54 32 42Q36 38 30 34" stroke="#4a78a8" strokeWidth="3" />
            <path d="M42 24Q52 20 57 28Q58 42 46 54Q38 60 32 56Q30 50 36 42" stroke="#b02050" strokeWidth="4" />
          </svg>
          <MarkText>
            <MarkName>野火论坛</MarkName>
            <MarkUrl>www.proewildfire.cn</MarkUrl>
          </MarkText>
        </Watermark>
      </Window>
    </>
  );
};

export default App;

/* ---------- styles ---------- */

const GlobalStyle = createGlobalStyle`
  * { box-sizing: border-box; }
  body {
    margin: 0;
    background: #1a1014;
    font-family: "Noto Sans", "Noto Sans CJK SC", sans-serif;
    font-size: 12px;
    line-height: 20px;
    color: #26323a;
  }
  button {
    margin: 0;
    padding: 0;
    border: 0;
    background: none;
    font: inherit;
    color: inherit;
  }
  svg { display: block; }
`;

const Window = styled.div`
  position: relative;
  display: flex;
  flex-direction: column;
  min-height: 100vh;
  padding: 0 7px 7px;
  overflow: hidden;
  border-radius: 7px;
  box-shadow: inset 0 0 0 1px #1c1014, inset 0 0 0 2px rgba(235, 215, 215, 0.55);
  background:
    linear-gradient(#a89496 0, #b7a5a6 180px, #6b3d42 200px, #5f3238 100%) left / 8px 100% no-repeat,
    linear-gradient(#9a8284 0, #b7a5a6 190px, #6b3d42 205px, #5f3238 470px, #2c1015 540px, #5f3238 100%) right / 8px 100% no-repeat,
    #6b3d42;
`;

const TitleBar = styled.header`
  display: flex;
  align-items: center;
  gap: 5px;
  height: 29px;
  margin: 0 -6px;
  padding: 0 7px;
  border-top: 1px solid #1c1014;
  background:
    linear-gradient(transparent 50%, rgba(160, 125, 115, 0.45)),
    linear-gradient(105deg, #a89496 0, #9c8688 150px, #7c5c60 250px, #4c2229 290px, #5a353b 330px, #4a2028 420px, #5a353b 440px, #5a353b 780px, #461c25 810px, #461c25 850px, #5a353b 880px, #481e27 920px, #56323a 1020px, #806466 1110px, #9a8284 100%);
`;

const Title = styled.h1`
  margin: 0;
  font-size: 12px;
  font-weight: 400;
  line-height: 18px;
  color: #000;
  border-radius: 9px;
  background: rgba(225, 210, 210, 0.4);
  box-shadow: 0 0 8px 6px rgba(225, 210, 210, 0.4);
`;

const WinControls = styled.div`
  display: flex;
  align-self: flex-start;
  margin-left: auto;
  border: 1px solid #d8c8c8;
  border-top: 0;
  border-radius: 0 0 5px 5px;
  overflow: hidden;
`;

const WinBtn = styled.button`
  display: grid;
  place-items: center;
  width: ${(p) => (p.$close ? 46 : 27)}px;
  height: 18px;
  border-left: ${(p) => (p.$close ? 0 : 1)}px solid #4a363a;
  background: ${(p) =>
    p.$close
      ? "linear-gradient(#d89080, #c05a48 45%, #a82410 50%, #d0502c)"
      : "linear-gradient(#a89496, #84686c 45%, #583a40 50%, #84686c)"};
`;

const Client = styled.div`
  flex: 1;
  display: flex;
  flex-direction: column;
  border: 1px solid #2a2428;
  background: #dce9f2;
`;

const MenuBar = styled.nav`
  display: flex;
  align-items: center;
  gap: 15px;
  height: 31px;
  padding: 5px 7px 0;
  border-bottom: 1px solid #b4cad8;
  background: linear-gradient(#f4fcfd, #e6eef6);
`;

const MenuItem = styled.button`
  white-space: nowrap;
  line-height: 18px;
  color: #2c3840;
`;

const ToolbarArea = styled.div`
  display: flex;
  align-items: flex-start;
  gap: 5px;
  padding: 1px 4px 3px;
  border-top: 1px solid #fff;
  border-bottom: 1px solid #b4cad8;
`;

const ToolGroup = styled.div`
  display: flex;
  gap: 7px;
`;

const dots = css`
  background:
    repeating-linear-gradient(#dce9f2 0 1px, transparent 1px 2px),
    repeating-linear-gradient(90deg, #3f7595 0 1px, #dce9f2 1px 2px);
`;

const Handle = styled.div`
  width: 4px;
  ${dots}
`;

const ToolRows = styled.div`
  display: flex;
  flex-direction: column;
`;

const ToolRow = styled.div`
  display: flex;
  gap: 2px;
  padding: 1px 0;
`;

const ToolBtn = styled.button`
  display: grid;
  place-items: center;
  flex: none;
  width: 26px;
  height: 26px;
  border-radius: 3px;
  ${(p) =>
    p.$pressed &&
    css`
      border: 1px solid #7d98aa;
      border-bottom-color: #a8c4d6;
      background: linear-gradient(#d3e4f0, #e4f1fa 50%, #aed6f4);
      box-shadow: 0 1px 0 #fff;
    `}
`;

const ArrowBtn = styled.button`
  display: grid;
  place-items: center;
  flex: none;
  width: 13px;

  ${ToolRow} & {
    margin-left: -2px;
  }
`;

const IconSvg = styled.svg`
  width: 20px;
  height: 20px;
  overflow: visible;
`;

const StatusRow = styled.div`
  display: flex;
  align-items: stretch;
  justify-content: flex-end;
  height: 29px;
  padding-right: 4px;
  border-top: 1px solid #fff;
  border-bottom: 1px solid #f2f8fb;
`;

const LightCell = styled.div`
  display: grid;
  place-items: center;
  width: 32px;
  margin: 2px 99px 0 0;
  border: solid #b4c4ce;
  border-width: 0 1px;
  box-shadow: inset 1px 0 0 #fff, 1px 0 0 #fff;
`;

const SelectWrap = styled.div`
  position: relative;
  align-self: flex-end;
  width: 286px;
  padding-bottom: 3px;
`;

const FilterSelect = styled.select`
  display: block;
  appearance: none;
  width: 100%;
  height: 20px;
  padding: 0 4px;
  border: 1px solid #5e93ad;
  border-radius: 2px;
  background: #fff;
  font: inherit;
  line-height: 18px;
  color: #222;
`;

const SelectArrow = styled.svg`
  position: absolute;
  right: 5px;
  top: 8px;
  pointer-events: none;
`;

const Main = styled.main`
  flex: 1;
  display: flex;
`;

const LeftPane = styled.aside`
  display: flex;
  width: 198px;
  background: repeating-linear-gradient(135deg, #cbdee9 0, #cbdee9 3px, #d5e4ed 4px, #d5e4ed 5px);
`;

const TreePanel = styled.section`
  display: flex;
  flex-direction: column;
  width: 189px;
`;

const Tabs = styled.div`
  display: flex;
  height: 28px;
  padding: 3px 0 0 7px;
`;

const Tab = styled.button`
  display: grid;
  place-items: center;
  width: 48px;
  padding-right: 6px;
  clip-path: polygon(0 4px, 3px 0, 32px 0, 37px 4px, 100% 100%, 0 100%);
  background: ${(p) => (p.$active ? "linear-gradient(#fff, #f3f7f9)" : "linear-gradient(#a3c0d5, #b4cddd)")};

  & + & {
    margin-left: -6px;
  }
`;

const PanelBody = styled.div`
  flex: 1;
  display: flex;
  flex-direction: column;
  padding-bottom: 7px;
  border-top: 1px solid #a4b8c4;
  border-top-right-radius: 4px;
  background:
    linear-gradient(#8fa9b8, rgba(143, 169, 184, 0) 240px) right top / 1px 100% no-repeat,
    linear-gradient(90deg, #f4f8fa, #d5e3ec) top / 100% 30px no-repeat,
    #d4e3ec;
`;

const PanelHead = styled.div`
  display: flex;
  align-items: center;
  height: 30px;
  padding: 0 6px 0 25px;
`;

const PanelTitle = styled.h2`
  margin: 0 auto 0 0;
  font-size: 13px;
  font-weight: 700;
  line-height: 20px;
`;

const HeadBtn = styled.button`
  width: 20px;
`;

const HeadGap = styled.span`
  width: 7px;
`;

const TreeBox = styled.div`
  flex: 1;
  margin: 0 8px 0 7px;
  border: 2px solid #76a4b8;
  border-radius: 5px;
  background: #fff;
`;

const RootRow = styled.div`
  display: flex;
  align-items: center;
  gap: 2px;
  height: 20px;
  padding-left: 4px;
`;

const RootLabel = styled.span`
  line-height: 17px;
  outline: 1px dotted #000;
`;

const TreeSvg = styled.svg`
  flex: none;
  width: 16px;
  height: 16px;
`;

const TreeList = styled.ul`
  margin: 0;
  padding: 0 0 0 7px;
  list-style: none;
`;

const TreeRow = styled.li`
  display: flex;
  align-items: center;
  height: 20px;
  white-space: nowrap;
  color: ${(p) => (p.$grey ? "#b9b9b9" : "#26323a")};

  span {
    margin-left: 3px;
  }
`;

const Branch = styled.div`
  display: flex;
  align-items: center;
  flex: none;
  width: 16px;
  height: 20px;
  background:
    repeating-linear-gradient(#999 0 1px, transparent 1px 2px) 4px 0 / 1px ${(p) => (p.$last ? 10 : 20)}px no-repeat,
    repeating-linear-gradient(90deg, #999 0 1px, transparent 1px 2px) 4px 10px / 12px 1px no-repeat;
`;

const PlusBtn = styled.button`
  width: 9px;
  height: 9px;
  border-radius: 2px;
  background: #c3dcec;
`;

const SplitBar = styled.div`
  flex: 1;
  display: flex;
  flex-direction: column;
  gap: 9px;
  padding-top: 187px;
`;

const SplitGrip = styled.button`
  height: ${(p) => (p.$dark ? 92 : 94)}px;
  border: 1px solid ${(p) => (p.$dark ? "#8296a2" : "#aac6d4")};
  border-right: 0;
  border-radius: 4px 0 0 4px;
  background: radial-gradient(circle, #fff 0, #fff 1px, #222 1px, #222 2px, transparent 2px);
`;

const Viewport = styled.div`
  flex: 1;
  display: grid;
  place-items: center;
  background: linear-gradient(#c4dbeb, #a3bed8 33%, #7b9ac0 68%, #5b7aa8);
`;

const ModelSvg = styled.svg`
  width: 442px;
  height: 190px;
  overflow: visible;
`;

const CsLabel = styled.text`
  font-family: "Liberation Mono", monospace;
  font-size: 10px;
  fill: #9a5a14;
`;

const RightPane = styled.aside`
  display: flex;
  gap: 2px;
  padding: 0 1px;
  background: #dce9f2;
`;

const SideCol = styled.div`
  display: flex;
  flex-direction: column;
`;

const SideBlock = styled.div`
  display: flex;
  flex-direction: column;
`;

const SideCols = styled.div`
  display: flex;
  gap: 2px;
`;

const SideRow = styled.div`
  display: flex;
  padding: 1px 0;
`;

const Flyout = styled.button`
  display: grid;
  place-items: center;
  width: 13px;
`;

const Sep = styled.div`
  height: 3px;
  margin: 4px 0 7px;
  ${dots}
`;

const Watermark = styled.div`
  position: absolute;
  right: 5px;
  bottom: 6px;
  display: flex;
  width: 206px;
  height: 61px;
  background: rgba(240, 245, 252, 0.42);
  pointer-events: none;

  svg {
    flex: none;
    opacity: 0.65;
  }
`;

const MarkText = styled.div`
  display: flex;
  flex-direction: column;
  align-items: flex-end;
  flex: 1;
  white-space: nowrap;
`;

const MarkName = styled.strong`
  margin-right: 16px;
  font-size: 30px;
  line-height: 40px;
  color: rgba(40, 170, 110, 0.55);
`;

const MarkUrl = styled.span`
  margin-right: 4px;
  font-size: 15px;
  line-height: 18px;
  color: rgba(110, 170, 205, 0.6);
`;
